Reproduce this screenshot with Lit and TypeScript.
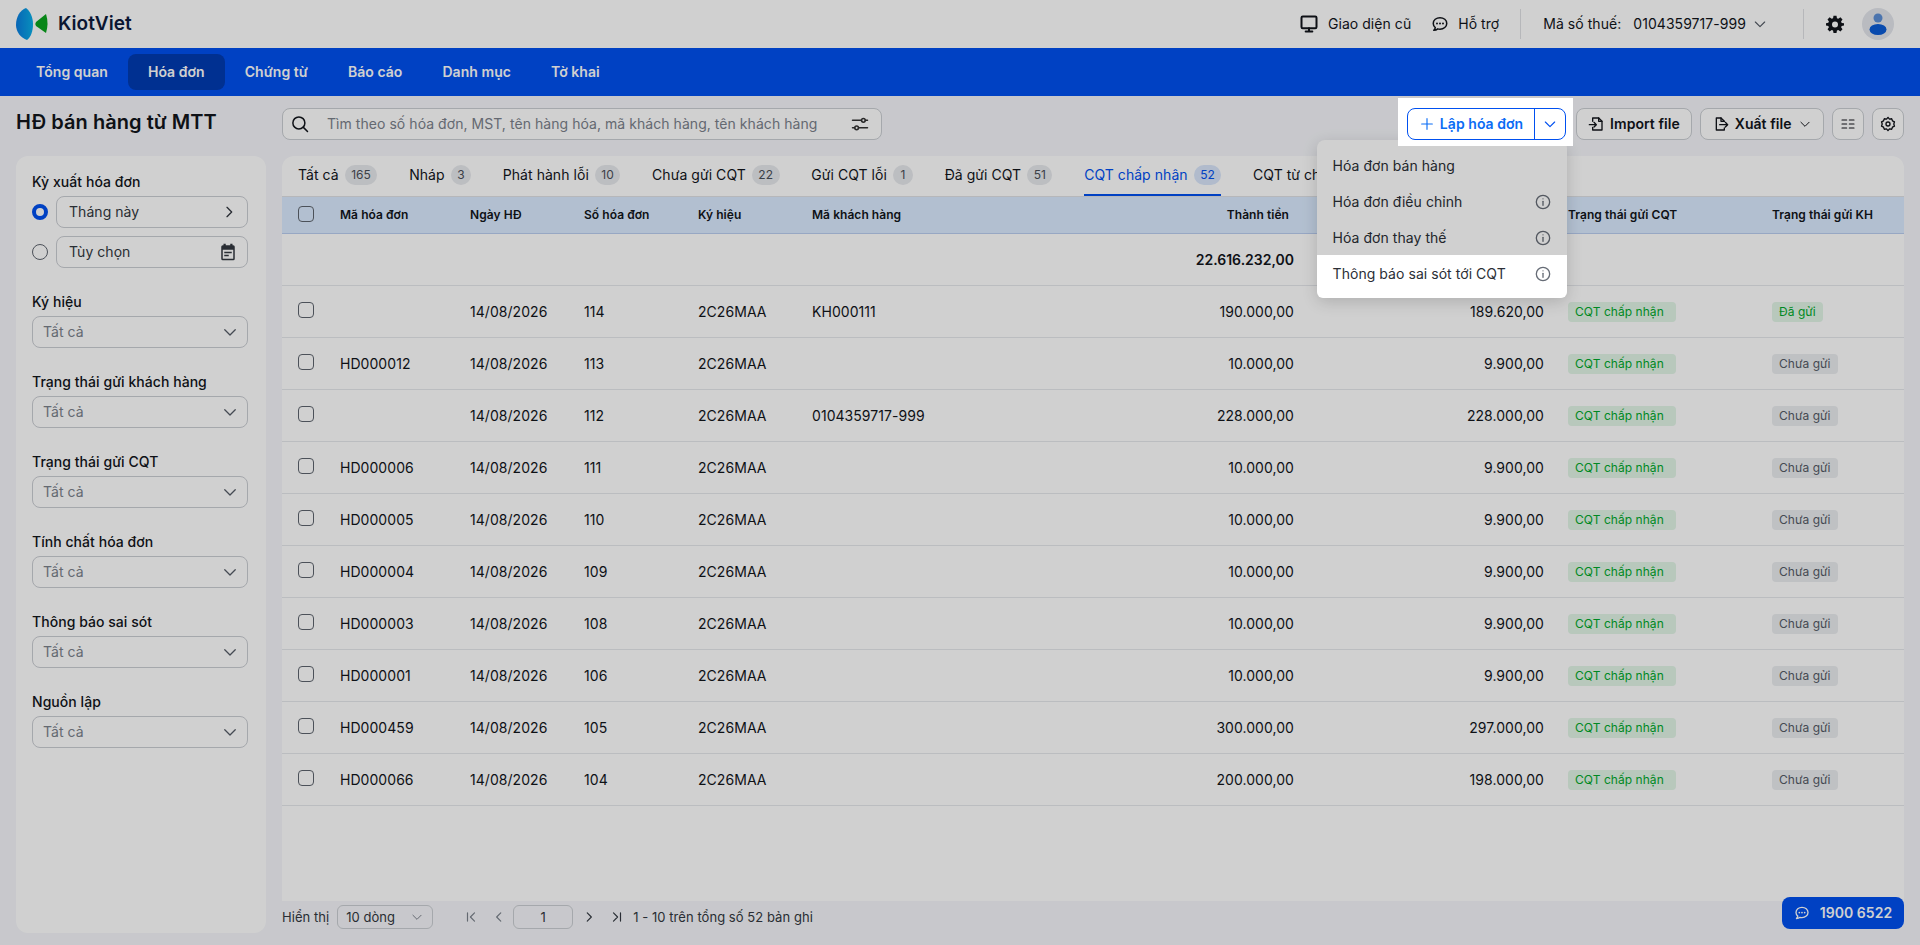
import { LitElement, html, css, svg } from 'lit';
import { customElement } from 'lit/decorators.js';
import { classMap } from 'lit/directives/class-map.js';

const icon = (size: number, body: unknown, cls = '') => html`<svg
  class="ico ${cls}"
  width=${size}
  height=${size}
  viewBox="0 0 24 24"
  fill="none"
  stroke="currentColor"
  stroke-width="2"
  stroke-linecap="round"
  stroke-linejoin="round"
>${body}</svg>`;

const chevronDown = svg`<path d="M5 9l7 7 7-7" stroke-width="1.700" />`;
const chevronRight = svg`<path d="M9 5l7 7-7 7" />`;
const chevronLeft = svg`<path d="M15 5l-7 7 7 7" />`;
const info = svg`<circle cx="12" cy="12" r="10" /><path d="M12 11v6" /><path d="M12 7.2v.1" />`;
const chat = svg`<path d="M12 3.5c-5 0-9 3.4-9 7.7 0 2.2 1 4.1 2.7 5.5-.2 1.4-.9 2.6-2 3.6 2 0 3.900-.6 5.300-1.800 1 .3 2 .4 3 .4 5 0 9-3.400 9-7.700s-4-7.700-9-7.700z" /><path d="M8 11.300v.1M12 11.300v.1M16 11.300v.1" stroke-width="2.600" />`;

interface Invoice {
  code: string;
  no: string;
  customer: string;
  amount: string;
  paid: string;
  sent: string;
}

const INVOICES: Invoice[] = [
  { code: '', no: '114', customer: 'KH000111', amount: '190.000,00', paid: '189.620,00', sent: 'Đã gửi' },
  { code: 'HD000012', no: '113', customer: '', amount: '10.000,00', paid: '9.900,00', sent: 'Chưa gửi' },
  { code: '', no: '112', customer: '0104359717-999', amount: '228.000,00', paid: '228.000,00', sent: 'Chưa gửi' },
  { code: 'HD000006', no: '111', customer: '', amount: '10.000,00', paid: '9.900,00', sent: 'Chưa gửi' },
  { code: 'HD000005', no: '110', customer: '', amount: '10.000,00', paid: '9.900,00', sent: 'Chưa gửi' },
  { code: 'HD000004', no: '109', customer: '', amount: '10.000,00', paid: '9.900,00', sent: 'Chưa gửi' },
  { code: 'HD000003', no: '108', customer: '', amount: '10.000,00', paid: '9.900,00', sent: 'Chưa gửi' },
  { code: 'HD000001', no: '106', customer: '', amount: '10.000,00', paid: '9.900,00', sent: 'Chưa gửi' },
  { code: 'HD000459', no: '105', customer: '', amount: '300.000,00', paid: '297.000,00', sent: 'Chưa gửi' },
  { code: 'HD000066', no: '104', customer: '', amount: '200.000,00', paid: '198.000,00', sent: 'Chưa gửi' },
];

const NAV = ['Tổng quan', 'Hóa đơn', 'Chứng từ', 'Báo cáo', 'Danh mục', 'Tờ khai'];

const TABS: [string, string][] = [
  ['Tất cả', '165'],
  ['Nháp', '3'],
  ['Phát hành lỗi', '10'],
  ['Chưa gửi CQT', '22'],
  ['Gửi CQT lỗi', '1'],
  ['Đã gửi CQT', '51'],
  ['CQT chấp nhận', '52'],
  ['CQT từ chối', ''],
];

const FILTERS = ['Ký hiệu', 'Trạng thái gửi khách hàng', 'Trạng thái gửi CQT', 'Tính chất hóa đơn', 'Thông báo sai sót', 'Nguồn lập'];

@customElement('app-root')
export class AppRoot extends LitElement {
  static styles = css`
    :host {
      display: block;
      position: relative;
      height: 945px;
      overflow: hidden;
      background: #f5f6fa;
      color: #12151b;
      font-family: Inter, 'Liberation Sans', sans-serif;
      font-size: 14px;
      line-height: 20px;
      letter-spacing: 0.05px;
    }
    * {
      box-sizing: border-box;
    }
    .ico {
      display: block;
      flex: none;
    }
    .backdrop {
      position: absolute;
      inset: 0;
      z-index: 10;
      background: rgba(0, 0, 0, 0.184);
    }

    /* top bar */
    .top {
      height: 48px;
      background: #fff;
      display: flex;
      align-items: center;
      padding: 0 26px 0 16px;
    }
    .logo {
      display: flex;
      align-items: center;
      gap: 9px;
      font-size: 19px;
      font-weight: 600;
      color: #0d1b3e;
      margin-right: auto;
    }
    .top-link {
      display: flex;
      align-items: center;
      gap: 9px;
      margin-right: 20px;
    }
    .top-link + .top-link {
      margin-right: 21px;
    }
    .divider {
      width: 1px;
      height: 30px;
      background: #dfe1e5;
    }
    .tax {
      display: flex;
      align-items: center;
      margin: 0 35px 0 22px;
    }
    .tax span {
      margin-right: 12px;
    }
    .tax .ico {
      margin-left: -6px;
      color: #555b66;
    }
    .gear {
      margin: 0 18px 0 22px;
    }
    .avatar {
      width: 32px;
      height: 32px;
      border-radius: 50%;
      background: #e3e6ec;
      display: flex;
      align-items: center;
      justify-content: center;
    }

    /* blue nav */
    .nav {
      height: 48px;
      background: #0050f0;
      display: flex;
      align-items: center;
      padding: 0 16px;
    }
    .nav a {
      height: 36px;
      padding: 0 20px;
      display: flex;
      align-items: center;
      border-radius: 8px;
      color: #fff;
      font-weight: 600;
    }
    .nav a.active {
      background: #003bb2;
    }

    /* toolbar */
    .bar {
      display: flex;
      align-items: center;
      height: 60px;
      padding: 12px 16px 16px;
    }
    .title {
      width: 266px;
      font-size: 20px;
      font-weight: 600;
      line-height: 28px;
      margin-top: -4px;
    }
    .search {
      width: 600px;
      height: 32px;
      border: 1px solid #cbced3;
      border-radius: 8px;
      background: #fff;
      display: flex;
      align-items: center;
      padding: 0 12px 0 8px;
      color: #7b818b;
    }
    .search .lens {
      color: #12151b;
      margin-right: 18px;
    }
    .search span {
      flex: 1;
    }
    .search .tune {
      color: #333;
    }
    .create {
      position: relative;
      margin-left: auto;
    }
    .group {
      position: relative;
      z-index: 20;
      width: 159px;
      height: 32px;
      color: #0a6cf5;
      font-weight: 600;
    }
    .group::before {
      content: '';
      position: absolute;
      inset: -10px -7px -6px -9px;
      background: #fff;
    }
    .group .inner {
      position: relative;
      height: 32px;
      display: flex;
      border: 1px solid #0050f0;
      border-radius: 8px;
    }
    .group .main {
      flex: 1;
      display: flex;
      align-items: center;
      justify-content: center;
      gap: 5px;
      padding-left: 1px;
      border-right: 1px solid #0050f0;
    }
    .group .more {
      width: 30px;
      display: flex;
      align-items: center;
      justify-content: center;
      color: #0050f0;
    }
    .menu {
      position: absolute;
      top: 32px;
      right: -1px;
      width: 250px;
      padding: 8px 0 6px;
      background: #fff;
      border-radius: 8px;
      box-shadow: 0 4px 16px rgba(0, 0, 0, 0.16);
    }
    .menu div {
      height: 36px;
      padding: 0 16px;
      display: flex;
      align-items: center;
      justify-content: space-between;
      color: #2b2f36;
    }
    .menu .ico {
      color: #666c76;
    }
    .menu .lit {
      position: relative;
      z-index: 20;
      height: 43px;
      margin: -1px 0 -6px;
      padding: 0 16px 6px;
      background: #fff;
      border-radius: 0 0 6px 6px;
    }
    .btn {
      height: 32px;
      margin-left: 8px;
      border: 1px solid #cbced3;
      border-radius: 8px;
      background: #fff;
      display: flex;
      align-items: center;
      justify-content: center;
      gap: 6px;
      padding: 0 11.5px;
      font-weight: 600;
    }
    .btn.square {
      width: 32px;
      padding: 0;
    }
    .create + .btn {
      margin-left: 10px;
    }

    /* body */
    .body {
      display: grid;
      grid-template-columns: 250px 1622px;
      gap: 16px;
      padding: 0 16px;
    }
    .side {
      height: 777px;
      background: #fff;
      border-radius: 12px;
      padding: 16px 18px 16px 16px;
    }
    .side label {
      display: block;
      font-weight: 500;
      margin-bottom: 4px;
    }
    .field {
      margin-bottom: 24px;
    }
    .opt {
      display: flex;
      align-items: center;
      gap: 8px;
      margin-bottom: 8px;
    }
    .radio {
      width: 16px;
      height: 16px;
      flex: none;
      border-radius: 50%;
      border: 1px solid #5e646e;
    }
    .radio.on {
      border: 4px solid #0050f0;
    }
    .input {
      flex: 1;
      height: 32px;
      border: 1px solid #cbced3;
      border-radius: 8px;
      display: flex;
      align-items: center;
      justify-content: space-between;
      padding: 0 10px 0 12px;
      color: #333840;
    }
    .select {
      height: 32px;
      border: 1px solid #cbced3;
      border-radius: 8px;
      display: flex;
      align-items: center;
      justify-content: space-between;
      padding: 0 8px 0 10px;
      color: #7b818b;
    }
    .select .ico {
      color: #555b66;
    }

    .card {
      height: 745px;
      background: #fff;
      border-radius: 12px 12px 0 0;
      overflow: hidden;
    }
    .tabs {
      height: 41px;
      display: flex;
      gap: 31.7px;
      padding: 0 16px;
      border-bottom: 1px solid #dfe1e5;
    }
    .tab {
      height: 40px;
      display: flex;
      align-items: center;
      gap: 6px;
      border-bottom: 2px solid transparent;
      white-space: nowrap;
    }
    .tab b {
      min-width: 20px;
      height: 20px;
      padding: 0 6.5px;
      border-radius: 10px;
      background: #e7e9ed;
      color: #4a4f58;
      font-size: 12px;
      font-weight: 400;
      text-align: center;
    }
    .tab.active {
      color: #0050f0;
      border-color: #0050f0;
    }
    .tab.active b {
      background: #d9e6fb;
      color: #0050f0;
    }
    .row {
      display: grid;
      grid-template-columns: 58px 130px 114px 114px 114px 240px 242px 250px 228px 132px;
      align-items: center;
      height: 52px;
      border-bottom: 1px solid #e6e8ec;
    }
    .row.head {
      height: 37px;
      background: #dbebff;
      border-bottom-color: #b9cdf0;
      font-size: 12px;
      font-weight: 600;
    }
    .row > :nth-child(9) {
      padding-left: 24px;
    }
    .num {
      text-align: right;
    }
    .head .num {
      padding-right: 5px;
    }
    .total {
      font-weight: 600;
      letter-spacing: 0;
    }
    .check {
      width: 16px;
      height: 16px;
      margin: -3px 0 0 16px;
      border: 1px solid #5e646e;
      border-radius: 4px;
    }
    .tag {
      display: inline-block;
      height: 20px;
      padding: 0 7px;
      border-radius: 4px;
      font-size: 12px;
      vertical-align: middle;
    }
    .tag.cqt {
      padding-right: 12px;
    }
    .tag.green {
      background: #e2f5e7;
      color: #00a92b;
    }
    .tag.gray {
      background: #ebedf0;
      color: #555b66;
    }
    .tag-wrap {
      line-height: 0;
    }
    .tag-wrap .tag {
      line-height: 20px;
    }

    .pager {
      display: flex;
      align-items: center;
      height: 32px;
      font-size: 13px;
      color: #333840;
    }
    .rows {
      width: 96px;
      height: 24px;
      margin: 0 31px 0 8px;
      border: 1px solid #cbced3;
      border-radius: 6px;
      display: flex;
      align-items: center;
      justify-content: space-between;
      padding: 0 8px;
    }
    .rows .ico {
      color: #7b818b;
    }
    .page {
      width: 60px;
      height: 24px;
      margin-right: 9px;
      border: 1px solid #cbced3;
      border-radius: 6px;
      text-align: center;
      line-height: 22px;
    }
    .pg {
      color: #7b818b;
      margin-right: 14px;
    }
    .pg.prev {
      margin-right: 7px;
    }
    .pg.dark {
      color: #333840;
    }
    .pg.last {
      margin-right: 9px;
    }
    .hotline {
      position: absolute;
      right: 16px;
      bottom: 16px;
      width: 122px;
      height: 32px;
      border-radius: 8px;
      background: #0050f0;
      color: #fff;
      display: flex;
      align-items: center;
      justify-content: center;
      gap: 10px;
      font-weight: 600;
    }
  `;

  renderLogo() {
    return html`<svg width="33" height="32" viewBox="0 0 33 32" class="ico">
      <defs>
        <linearGradient id="lg" x1="0" x2="1" y1="0" y2="0">
          <stop offset="0" stop-color="#0a7de0" />
          <stop offset="1" stop-color="#0ab0e8" />
        </linearGradient>
      </defs>
      <path d="M10 0C4 2 0 9 0 17c0 7 5 13 11 15 4-3 6-9 6-16S14 3 10 0z" fill="url(#lg)" />
      <path d="M30 6L20 14q-1.500 2 0 4l10 7q3-9.500 0-19z" fill="#0aa51e" />
    </svg>`;
  }

  renderTop() {
    return html`<div class="top">
      <div class="logo">${this.renderLogo()}KiotViet</div>
      <div class="top-link">
        ${icon(20, svg`<rect x="3" y="3" width="18" height="14" rx="1.500" stroke-width="2.400" /><path d="M8 21h8M12 17v4" stroke-width="2.400" />`)} Giao diện cũ
      </div>
      <div class="top-link">${icon(18, chat)} Hỗ trợ</div>
      <div class="divider"></div>
      <div class="tax">
        <span>Mã số thuế:</span><span>0104359717-999</span>${icon(16, chevronDown)}
      </div>
      <div class="divider"></div>
      <svg class="ico gear" width="18" height="18" viewBox="0 0 24 24">
        <path
          fill="#12151b"
          fill-rule="evenodd"
          d="M10 1h4l.6 3.200 1.800.8L19.200 3.100 22 6l-1.900 2.700.8 1.800L24 11v3l-3.100.6-.8 1.800 1.900 2.700-2.800 2.800-2.800-1.900-1.800.8L14 23.900h-4l-.6-3.100-1.800-.8-2.800 1.900L2 19.100l1.900-2.700-.8-1.800L0 14v-3l3.100-.6.8-1.800L2 6l2.800-2.900L7.600 5l1.800-.8zM12 8.500a4 4 0 100 8 4 4 0 000-8z"
        />
      </svg>
      <div class="avatar">
        <svg width="18" height="24" viewBox="0 0 18 24">
          <circle cx="9" cy="6" r="4.500" fill="#5c8fd6" />
          <ellipse cx="9" cy="17.500" rx="8.500" ry="5.500" fill="#0a5bd6" />
        </svg>
      </div>
    </div>`;
  }

  renderCreate() {
    return html`<div class="create">
      <div class="group">
        <div class="inner">
          <div class="main">
            ${icon(16, svg`<path d="M12 4v16M4 12h16" stroke-width="1.700" />`)} Lập hóa đơn
          </div>
          <div class="more">${icon(16, chevronDown)}</div>
        </div>
      </div>
      <div class="menu">
        <div>Hóa đơn bán hàng</div>
        <div>Hóa đơn điều chỉnh ${icon(16, info)}</div>
        <div>Hóa đơn thay thế ${icon(16, info)}</div>
        <div class="lit">Thông báo sai sót tới CQT ${icon(16, info)}</div>
      </div>
    </div>`;
  }

  renderBar() {
    return html`<div class="bar">
      <div class="title">HĐ bán hàng từ MTT</div>
      <div class="search">
        ${icon(18, svg`<circle cx="10.500" cy="10.500" r="8" /><path d="M16.500 16.500l5.500 5.500" />`, 'lens')}
        <span>Tìm theo số hóa đơn, MST, tên hàng hóa, mã khách hàng, tên khách hàng</span>
        ${icon(18, svg`<path d="M2 7h12M19 7h3M2 17h3M10 17h12" /><circle cx="16.500" cy="7" r="2.500" /><circle cx="7.500" cy="17" r="2.500" />`, 'tune')}
      </div>
      ${this.renderCreate()}
      <div class="btn">
        ${icon(16, svg`<path d="M7 8V3h9l5 5v13H7v-4" /><path d="M16 3v5h5" /><path d="M2 13h10M9 9.500l3.500 3.500L9 16.500" />`)} Import file
      </div>
      <div class="btn">
        ${icon(16, svg`<path d="M17 8l-5-5H5v18h12v-3" /><path d="M12 3v5h5" /><path d="M10 13h12M18.500 9.500L22 13l-3.500 3.500" />`)} Xuất file ${icon(14, chevronDown)}
      </div>
      <div class="btn square">
        ${icon(16, svg`<path d="M3 6h7M14 6h7M3 12h7M14 12h7M3 18h7M14 18h7" stroke-width="1.700" />`)}
      </div>
      <div class="btn square">
        ${icon(16, svg`<path d="M12 2l2.200 2.600 3.300-.5 1.200 3.100 3 1.500-1 3.300 1 3.300-3 1.500-1.200 3.100-3.300-.5L12 22l-2.200-2.600-3.300.5-1.200-3.100-3-1.500 1-3.300-1-3.300 3-1.500 1.200-3.100 3.300.5z" /><circle cx="12" cy="12" r="3" />`)}
      </div>
    </div>`;
  }

  renderSide() {
    return html`<aside class="side">
      <div class="field">
        <label>Kỳ xuất hóa đơn</label>
        <div class="opt">
          <div class="radio on"></div>
          <div class="input">Tháng này ${icon(16, chevronRight)}</div>
        </div>
        <div class="opt">
          <div class="radio"></div>
          <div class="input">
            Tùy chọn
            <svg class="ico" width="18" height="18" viewBox="0 0 24 24">
              <path fill="#333840" fill-rule="evenodd" d="M6 1h3v2h6V1h3v2h1a2 2 0 012 2v16a2 2 0 01-2 2H5a2 2 0 01-2-2V5a2 2 0 012-2h1zM5 9v12h14V9zM7 11.500h10v2H7zM7 15.500h6v2H7z" />
            </svg>
          </div>
        </div>
      </div>
      ${FILTERS.map(
        (f) => html`<div class="field">
          <label>${f}</label>
          <div class="select">Tất cả ${icon(18, chevronDown)}</div>
        </div>`,
      )}
    </aside>`;
  }

  renderTable() {
    return html`<div class="row head">
        <div class="check"></div>
        <div>Mã hóa đơn</div>
        <div>Ngày HĐ</div>
        <div>Số hóa đơn</div>
        <div>Ký hiệu</div>
        <div>Mã khách hàng</div>
        <div class="num">Thành tiền</div>
        <div class="num">Tổng tiền</div>
        <div>Trạng thái gửi CQT</div>
        <div>Trạng thái gửi KH</div>
      </div>
      <div class="row total">
        <div></div><div></div><div></div><div></div><div></div><div></div>
        <div class="num">22.616.232,00</div>
      </div>
      ${INVOICES.map(
        (r) => html`<div class="row">
          <div class="check"></div>
          <div>${r.code}</div>
          <div>14/08/2026</div>
          <div>${r.no}</div>
          <div>2C26MAA</div>
          <div>${r.customer}</div>
          <div class="num">${r.amount}</div>
          <div class="num">${r.paid}</div>
          <div class="tag-wrap"><span class="tag green cqt">CQT chấp nhận</span></div>
          <div class="tag-wrap">
            <span class="tag ${r.sent === 'Đã gửi' ? 'green' : 'gray'}">${r.sent}</span>
          </div>
        </div>`,
      )}`;
  }

  render() {
    return html`
      ${this.renderTop()}
      <nav class="nav">
        ${NAV.map((n) => html`<a class=${classMap({ active: n === 'Hóa đơn' })}>${n}</a>`)}
      </nav>
      ${this.renderBar()}
      <div class="body">
        ${this.renderSide()}
        <div>
          <div class="card">
            <div class="tabs">
              ${TABS.map(
                ([t, n]) => html`<div class=${classMap({ tab: true, active: t === 'CQT chấp nhận' })}>
                  ${t}${n ? html`<b>${n}</b>` : ''}
                </div>`,
              )}
            </div>
            ${this.renderTable()}
          </div>
          <div class="pager">
            Hiển thị
            <div class="rows">10 dòng ${icon(14, chevronDown)}</div>
            ${icon(14, svg`<path d="M6 5v14M18 5l-7 7 7 7" />`, 'pg')}
            ${icon(14, chevronLeft, 'pg prev')}
            <div class="page">1</div>
            ${icon(14, chevronRight, 'pg dark')}
            ${icon(14, svg`<path d="M18 5v14M6 5l7 7-7 7" />`, 'pg dark last')}
            1 - 10 trên tổng số 52 bản ghi
          </div>
        </div>
      </div>
      <div class="hotline">${icon(16, chat)} 1900 6522</div>
      <div class="backdrop"></div>
    `;
  }
}
